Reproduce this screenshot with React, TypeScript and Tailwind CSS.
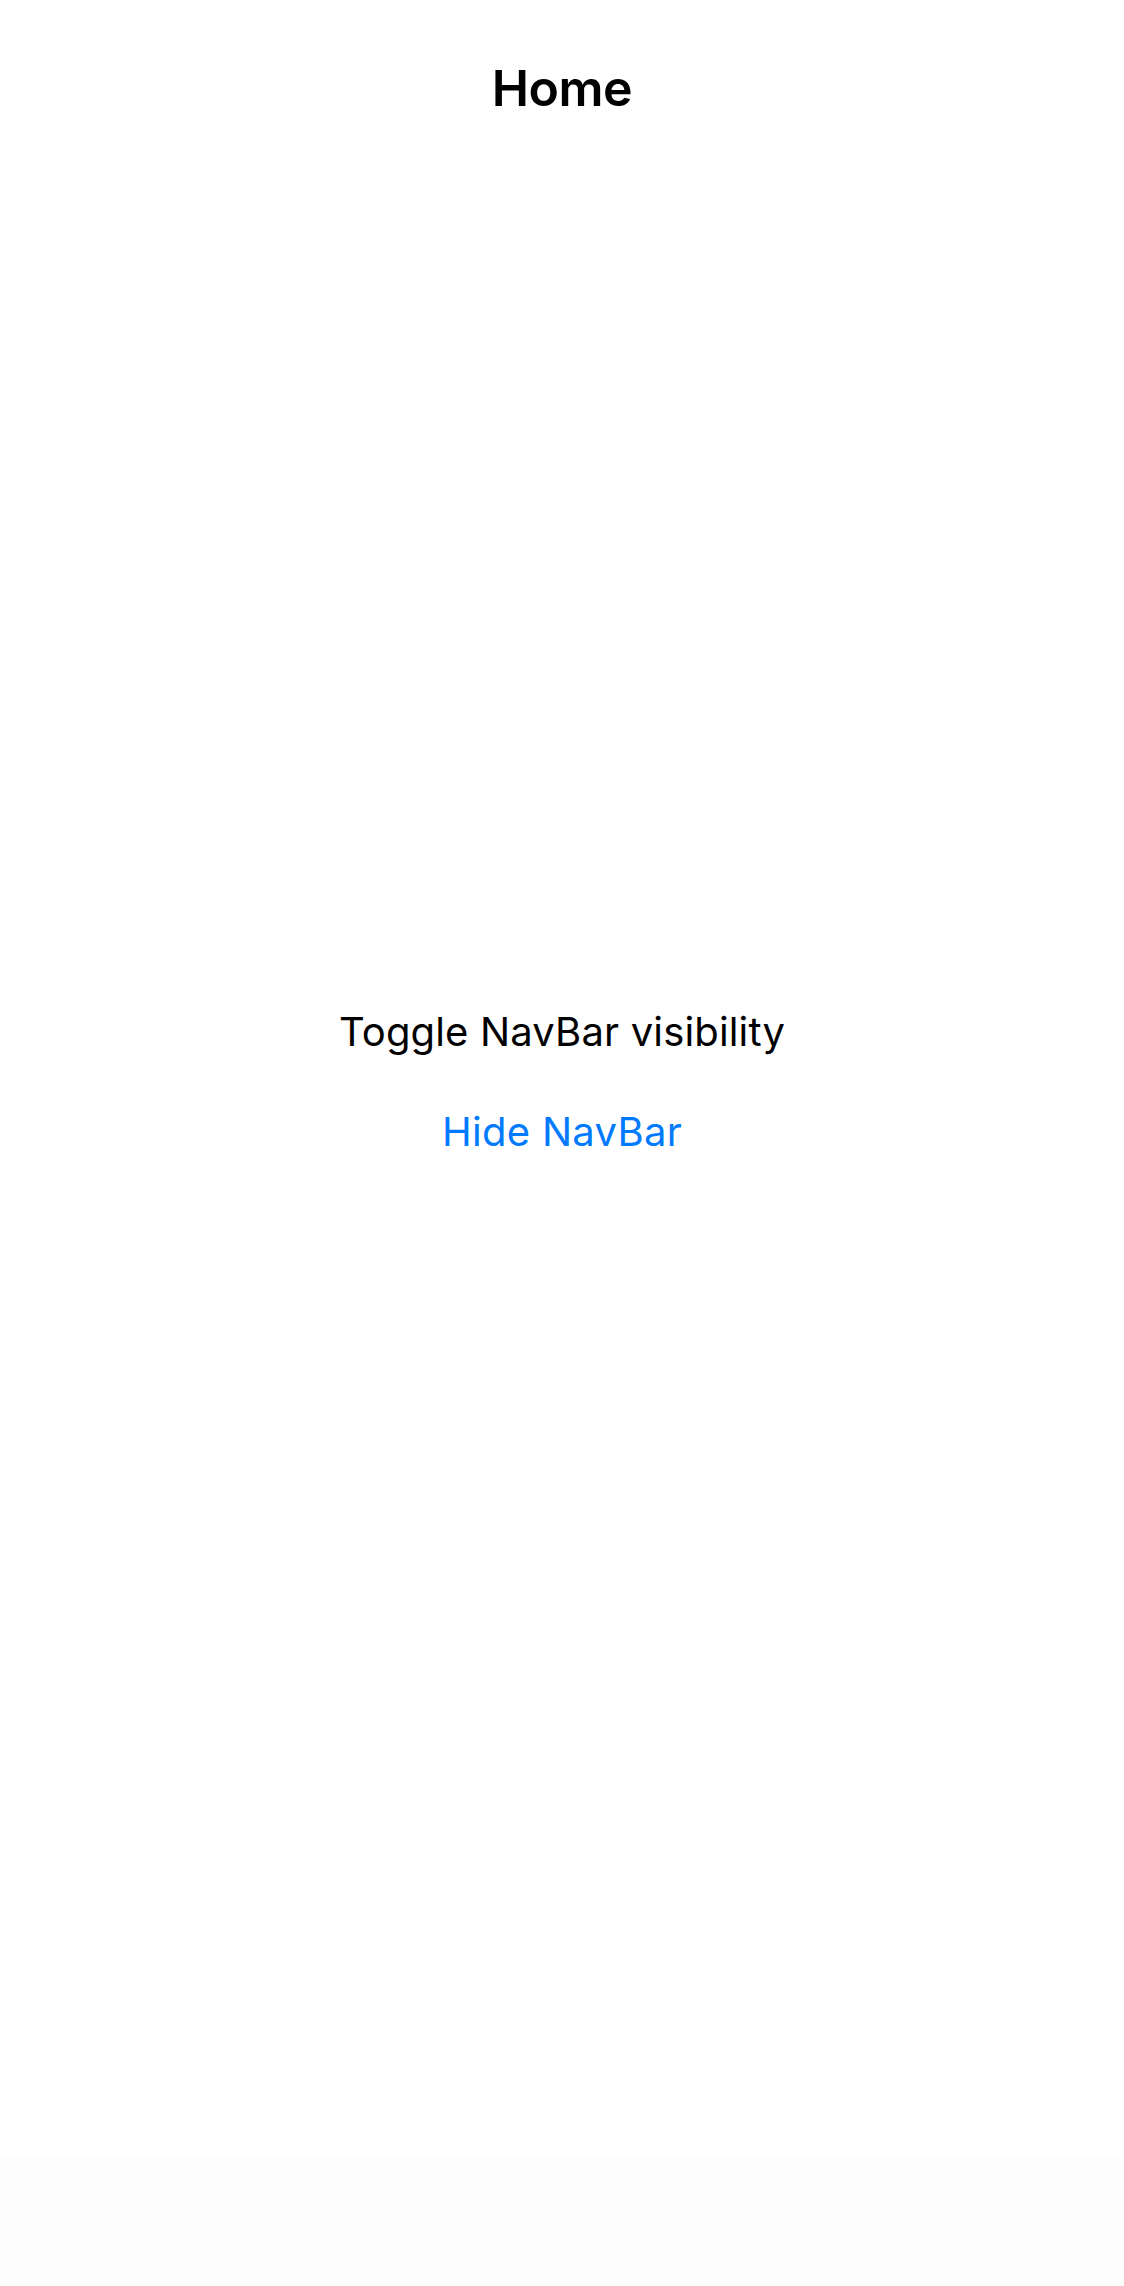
import React from "react";

export default function App() {
  return (
    <div
      className="w-[1124px] h-[2286px] bg-white flex flex-col overflow-hidden"
      style={{ fontFamily: 'Inter, "Noto Sans", sans-serif' }}
    >
      <header className="pt-[58px] flex justify-center">
        <h1 className="text-[50px] leading-[60px] font-semibold text-black tracking-[-0.5px]">
          Home
        </h1>
      </header>
      <main className="flex flex-col items-center pt-[890px]">
        <p className="text-[40px] leading-[48px] text-black tracking-[0.15px]">
          Toggle NavBar visibility
        </p>
        <button className="mt-[52px] text-[40px] leading-[48px] text-[#007aff] tracking-[0.3px]">
          Hide NavBar
        </button>
      </main>
      <div className="flex-1" />
      <div className="h-[130px] bg-[#fdfdfd]" />
    </div>
  );
}
